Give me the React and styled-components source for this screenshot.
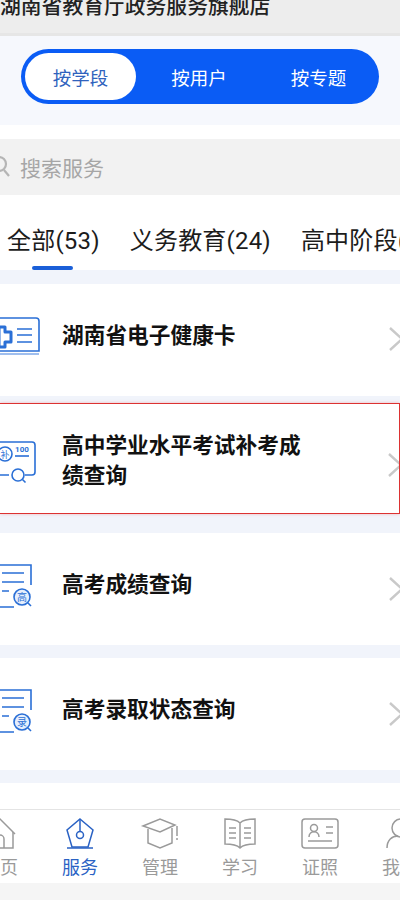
import React from 'react';
import styled, { createGlobalStyle, css } from 'styled-components';

const GlobalStyle = createGlobalStyle`
  html, body {
    margin: 0;
    padding: 0;
    background: #fff;
  }
  * {
    box-sizing: border-box;
  }
`;

const Page = styled.div`
  width: 400px;
  height: 900px;
  overflow: hidden;
  display: flex;
  flex-direction: column;
  background: #f1f4fb;
  font-family: Roboto, "Noto Sans CJK SC", "Liberation Sans", sans-serif;
  color: #111;
`;

const TopBar = styled.div`
  height: 36px;
  flex: none;
  background: #ededed;
  border-bottom: 3px solid #e6e6e6;
  overflow: hidden;
`;

const TopTitle = styled.div`
  margin-top: -8px;
  font-size: 20.8px;
  font-weight: 500;
  line-height: 30px;
  white-space: nowrap;
  color: #222;
`;

const SegmentWrap = styled.div`
  height: 89px;
  flex: none;
  padding: 13px 21px 0;
  background: #f6f8fd;
`;

const Segment = styled.div`
  height: 55px;
  padding: 4px;
  display: grid;
  grid-template-columns: 111px 126px 1fr;
  border-radius: 28px;
  background: #0a5cf5;
`;

const SegmentItem = styled.div`
  display: flex;
  align-items: center;
  justify-content: center;
  border-radius: 24px;
  font-size: 18.5px;
  color: ${(p) => (p.$active ? '#2f62bd' : '#fff')};
  background: ${(p) => (p.$active ? '#fff' : 'transparent')};
`;

const SearchWrap = styled.div`
  flex: none;
  padding-top: 14px;
  background: #fff;
`;

const SearchBar = styled.div`
  height: 56px;
  display: flex;
  align-items: center;
  gap: 9px;
  background: #f2f2f2;
  font-size: 21px;
  color: #a6a6a6;
`;

const SearchIcon = styled.svg`
  width: 11px;
  height: 24px;
  flex: none;
`;

const Tabs = styled.div`
  height: 75px;
  flex: none;
  display: flex;
  gap: 30px;
  padding: 27px 0 0 7px;
  background: #fff;
  white-space: nowrap;
  font-size: 24px;
  letter-spacing: 0.2px;
  line-height: 38px;
  color: #1c1c1c;
`;

const Tab = styled.div`
  position: relative;
  height: 48px;
  flex: none;

  ${(p) =>
    p.$active &&
    css`
      &::after {
        content: '';
        position: absolute;
        left: 25px;
        bottom: 0;
        width: 41px;
        height: 4px;
        border-radius: 2px;
        background: #1a5fd8;
      }
    `}
`;

const List = styled.div`
  flex: 1;
  min-height: 0;
  padding-top: 14px;
  display: flex;
  flex-direction: column;
`;

const Card = styled.div`
  height: 112px;
  margin-top: ${(p) => p.$gap || 0}px;
  flex: none;
  display: flex;
  align-items: center;
  background: #fff;
  ${(p) =>
    p.$flagged &&
    css`
      height: 111px;
      border: solid rgb(220, 50, 50);
      border-width: 1px 1px 1px 0;
      box-shadow: 0 0 3px rgba(240, 80, 80, 0.35);
    `}
`;

const IconCell = styled.div`
  width: 62px;
  height: 60px;
  flex: none;
  display: flex;
  align-items: center;
`;

const CardTitle = styled.div`
  width: 250px;
  flex: none;
  margin-top: ${(p) => (p.$wrapped ? '5px' : '-8px')};
  font-size: 21.7px;
  line-height: 30px;
  font-weight: 700;
  color: #111;
`;

const Chevron = styled.svg`
  width: 12px;
  height: 28px;
  margin-left: auto;
  margin-top: ${(p) => p.$shift || 0}px;
  flex: none;
`;

const BottomNav = styled.div`
  height: 100px;
  flex: none;
  margin-top: 13px;
  padding-top: 26px;
  background: #fff;
`;

const NavRow = styled.div`
  height: 74px;
  margin-left: -40px;
  width: 480px;
  padding-top: 6px;
  border-top: 1px solid #e4e4e4;
  display: grid;
  grid-template-columns: repeat(6, 80px);
`;

const NavItem = styled.div`
  display: flex;
  flex-direction: column;
  align-items: center;
  gap: 5px;
  font-size: 18px;
  line-height: 26px;
  color: ${(p) => (p.$active ? '#2a62c4' : '#9a9a9a')};
`;

const NavIcon = styled.svg`
  width: 40px;
  height: 34px;
  flex: none;
  fill: none;
  stroke: currentColor;
  stroke-width: 1.5;
`;

const Footer = styled.div`
  height: 17px;
  flex: none;
  background: #f5f5f5;
`;

const CardIcon = ({ kind }) => {
  const blue = '#2a6fd6';
  if (kind === 'health') {
    return (
      <svg width="42" height="46" viewBox="0 0 42 46" fill="none" stroke={blue} strokeWidth="1.6">
        <path d="M0 1h36a3 3 0 0 1 3 3v30H0" />
        <path d="M0 37h39" stroke="#7fa8e8" />
        <path d="M17 12h15M17 18h15M17 25h15" />
        <path d="M-1 10h6v5h6v10H5v5h-6z" fill="#fff" stroke={blue} strokeWidth="3" strokeLinejoin="round" />
      </svg>
    );
  }
  if (kind === 'retake') {
    return (
      <svg width="38" height="50" viewBox="0 0 38 50" fill="none" stroke={blue} strokeWidth="1.6">
        <path d="M0 8h32a3 3 0 0 1 3 3v27a3 3 0 0 1-3 3h-7M0 41h9" />
        <circle cx="5" cy="20" r="7" />
        <text x="5" y="23.5" fontSize="9" textAnchor="middle" fill={blue} stroke="none">补</text>
        <text x="22" y="18" fontSize="8" fontWeight="700" textAnchor="middle" fill={blue} stroke="none">100</text>
        <path d="M15 22h14" />
        <circle cx="18" cy="41" r="6" />
        <path d="M22.5 45.5l3 3" />
      </svg>
    );
  }
  return (
    <svg width="34" height="50" viewBox="0 0 34 50" fill="none" stroke={blue} strokeWidth="1.6">
      <path d="M0 1h31v20M14 43H0" />
      <path d="M2 9h22M2 18h22M2 27h7" />
      <circle cx="22" cy="33" r="8" fill="#e6effc" />
      <text x="22" y="37" fontSize="10" textAnchor="middle" fill={blue} stroke="none">{kind}</text>
      <path d="M28 39l3 3" />
    </svg>
  );
};

const navIcons = {
  home: (
    <>
      <path d="M5 18L20 3l15 15" />
      <path d="M7 16v16h26V16M16 32v-9a4 4 0 0 1 8 0v9" />
    </>
  ),
  service: (
    <>
      <path d="M20 3l13 11-5 17H12L7 14z" />
      <circle cx="20" cy="19" r="3.5" />
      <path d="M20 3v12M7 32h26" />
    </>
  ),
  manage: (
    <>
      <path d="M3 10l17-7 15 6-15 7z" />
      <path d="M8 13v14l12 5 12-5V12M37 10v10M37 22v2" />
    </>
  ),
  study: (
    <>
      <path d="M20 7c-3-3-9-4-15-4v25c6 0 12 1 15 4 3-3 9-4 15-4V3c-6 0-12 1-15 4zM20 7v25" />
      <path d="M9 12h7M9 17h7M9 22h7M24 12h7M24 17h7M24 22h7" />
    </>
  ),
  cert: (
    <>
      <rect x="2" y="3" width="36" height="29" rx="3" />
      <circle cx="14" cy="12" r="3.5" />
      <path d="M9 21c0-7 10-7 10 0M26 11h7M26 17h7M8 25h24" />
    </>
  ),
  me: (
    <>
      <circle cx="21" cy="12" r="9" />
      <path d="M7 32c0-8 5-12 11-12" />
    </>
  ),
};

const navItems = [
  ['home', '首页'],
  ['service', '服务', true],
  ['manage', '管理'],
  ['study', '学习'],
  ['cert', '证照'],
  ['me', '我的'],
];

const ChevronIcon = ({ shift }) => (
  <Chevron $shift={shift} viewBox="0 0 12 28" fill="none" stroke="#c9c9c9" strokeWidth="2.4">
    <path d="M2 3l12 11L2 25" />
  </Chevron>
);

export default function App() {
  return (
    <Page>
      <GlobalStyle />
      <TopBar>
        <TopTitle>湖南省教育厅政务服务旗舰店</TopTitle>
      </TopBar>
      <SegmentWrap>
        <Segment>
          <SegmentItem $active>按学段</SegmentItem>
          <SegmentItem>按用户</SegmentItem>
          <SegmentItem>按专题</SegmentItem>
        </Segment>
      </SegmentWrap>
      <SearchWrap>
        <SearchBar>
          <SearchIcon viewBox="0 0 11 24" fill="none" stroke="#b5b5b5" strokeWidth="2.2">
            <circle cx="-1" cy="9" r="7" />
            <path d="M4 15l5 6" />
          </SearchIcon>
          搜索服务
        </SearchBar>
      </SearchWrap>
      <Tabs>
        <Tab $active>全部(53)</Tab>
        <Tab>义务教育(24)</Tab>
        <Tab>高中阶段(12)</Tab>
      </Tabs>
      <List>
        <Card>
          <IconCell><CardIcon kind="health" /></IconCell>
          <CardTitle>湖南省电子健康卡</CardTitle>
          <ChevronIcon shift={-2} />
        </Card>
        <Card $flagged $gap={7}>
          <IconCell><CardIcon kind="retake" /></IconCell>
          <CardTitle $wrapped>高中学业水平考试补考成绩查询</CardTitle>
          <ChevronIcon shift={12} />
        </Card>
        <Card $gap={19}>
          <IconCell><CardIcon kind="高" /></IconCell>
          <CardTitle>高考成绩查询</CardTitle>
          <ChevronIcon />
        </Card>
        <Card $gap={13}>
          <IconCell><CardIcon kind="录" /></IconCell>
          <CardTitle>高考录取状态查询</CardTitle>
          <ChevronIcon />
        </Card>
      </List>
      <BottomNav>
        <NavRow>
          {navItems.map(([icon, label, active]) => (
            <NavItem key={icon} $active={active}>
              <NavIcon viewBox="0 0 40 34">{navIcons[icon]}</NavIcon>
              {label}
            </NavItem>
          ))}
        </NavRow>
      </BottomNav>
      <Footer />
    </Page>
  );
}
